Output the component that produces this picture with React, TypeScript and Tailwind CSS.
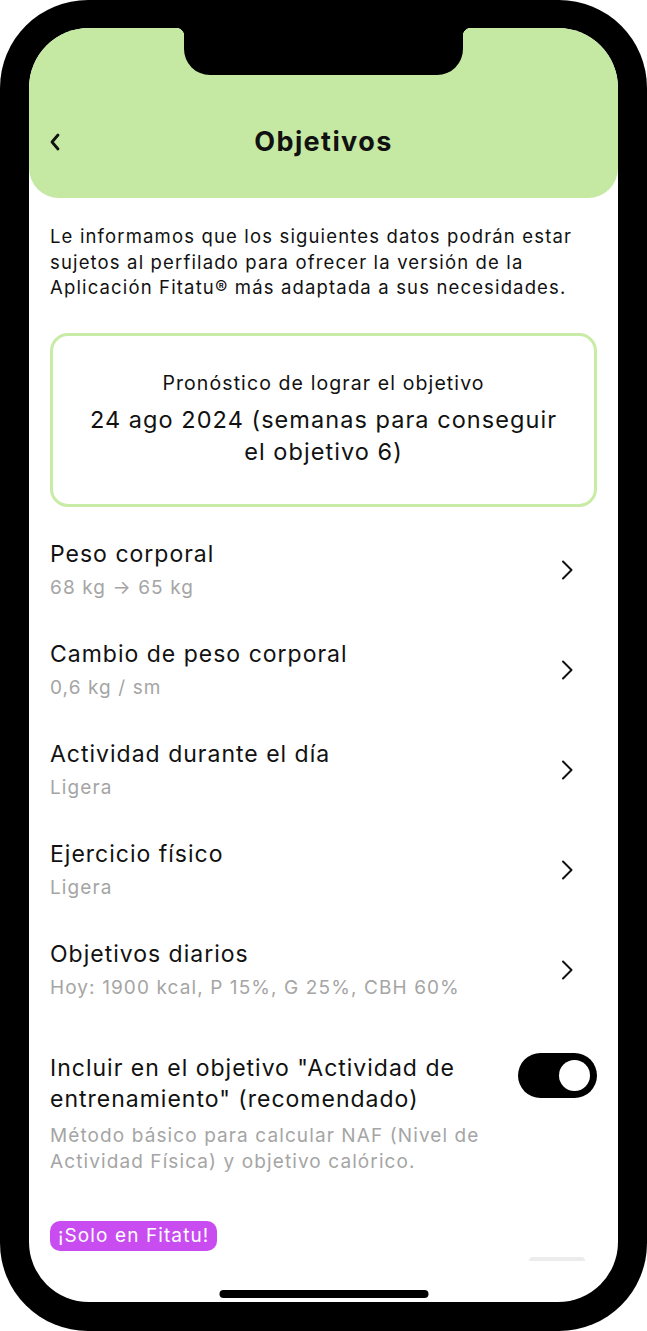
import React from "react";

const font = { fontFamily: "Inter, 'Noto Sans', sans-serif" };

const Chevron = () => (
    <svg width="16" height="22" viewBox="0 0 16 22" fill="none">
        <path d="M4 2.5 L12.5 11 L4 19.5" stroke="#111" strokeWidth="2" strokeLinecap="round" strokeLinejoin="round" />
    </svg>
);

const rows = [
    { title: "Peso corporal", sub: "68 kg → 65 kg" },
    { title: "Cambio de peso corporal", sub: "0,6 kg / sm" },
    { title: "Actividad durante el día", sub: "Ligera" },
    { title: "Ejercicio físico", sub: "Ligera" },
    { title: "Objetivos diarios", sub: "Hoy: 1900 kcal, P 15%, G 25%, CBH 60%" },
];

const Row = ({ title, sub }: { title: string; sub: string }) => (
    <div className="flex items-center justify-between h-[100px]">
        <div className="flex flex-col">
            <span className="text-[23px] leading-[30px] text-[#111] tracking-[1px]">{title}</span>
            <span className="text-[19px] leading-[26px] text-[#a5a5a5] mt-[6px] tracking-[1.1px]">{sub}</span>
        </div>
        <div className="mr-[22px]">
            <Chevron />
        </div>
    </div>
);

export default function App() {
    return (
        <div className="w-[647px] h-[1331px] bg-white" style={font}>
            <div className="relative w-full h-full bg-black rounded-[88px] p-[29px] pt-[28px]">
                <div className="relative w-full h-full bg-white rounded-[60px] overflow-hidden flex flex-col">
                    {/* header */}
                    <div className="h-[170px] bg-[#c5e9a2] rounded-b-[30px] flex items-end pb-[36px] px-[18px] shrink-0">
                        <div className="relative w-full h-[40px] flex items-center justify-center">
                            <button className="absolute left-0 top-0 h-[40px] flex items-center">
                                <svg width="16" height="22" viewBox="0 0 16 22" fill="none">
                                    <path d="M11 4 L5 11 L11 18" stroke="#111" strokeWidth="2.8" strokeLinecap="round" strokeLinejoin="round" />
                                </svg>
                            </button>
                            <h1 className="text-[27px] font-bold text-[#111] tracking-[1.4px]">Objetivos</h1>
                        </div>
                    </div>

                    <div className="px-[21px] flex flex-col">
                        <p className="mt-[26px] text-[18.5px] leading-[25.5px] text-[#111] tracking-[1.15px]">
                            Le informamos que los siguientes datos podrán estar sujetos al perfilado para ofrecer la versión de la Aplicación Fitatu® más adaptada a sus necesidades.
                        </p>

                        <div className="mt-[32px] h-[174px] border-[3px] border-[#c8eba6] rounded-[18px] flex flex-col items-center justify-center text-center px-[26px]">
                            <span className="text-[19.5px] leading-[25px] text-[#111] tracking-[1.1px]">Pronóstico de lograr el objetivo</span>
                            <span className="mt-[8px] text-[23.5px] leading-[32px] text-[#111] tracking-[1.05px]">
                                24 ago 2024 (semanas para conseguir el objetivo 6)
                            </span>
                        </div>

                        <div className="mt-[13px] flex flex-col">
                            {rows.map((r) => (
                                <Row key={r.title} title={r.title} sub={r.sub} />
                            ))}
                        </div>

                        <div className="mt-[33px] flex items-start justify-between">
                            <div className="flex flex-col w-[450px]">
                                <span className="text-[23px] leading-[31px] text-[#111] tracking-[1px]">
                                    Incluir en el objetivo "Actividad de entrenamiento" (recomendado)
                                </span>
                                <span className="mt-[8px] text-[19px] leading-[26px] text-[#a5a5a5] tracking-[1.1px]">
                                    Método básico para calcular NAF (Nivel de Actividad Física) y objetivo calórico.
                                </span>
                            </div>
                            <div className="w-[79px] h-[45px] rounded-full bg-black flex items-center justify-end pr-[7px] shrink-0">
                                <div className="w-[31px] h-[31px] rounded-full bg-white" />
                            </div>
                        </div>

                        <div className="mt-[46px] flex">
                            <span className="h-[30px] px-[8px] rounded-[10px] bg-[#c94cf1] text-white text-[19px] leading-[30px] tracking-[1.1px]">
                                ¡Solo en Fitatu!
                            </span>
                        </div>
                        <div className="flex justify-end pr-[12px] mt-[6px]">
                            <div className="w-[56px] h-[4px] rounded-t-full bg-[#ececec]" />
                        </div>
                    </div>

                    <div className="absolute bottom-[4px] left-1/2 -translate-x-1/2 w-[209px] h-[8px] rounded-full bg-black" />
                </div>

                {/* notch */}
                <div className="absolute top-[27px] left-[184px] w-[279px] h-[48px] bg-black rounded-b-[26px]" />
                <div className="absolute top-[28px] left-[176px] w-[8px] h-[8px] bg-[radial-gradient(circle_at_0_100%,transparent_8px,black_8.5px)]" />
                <div className="absolute top-[28px] left-[463px] w-[8px] h-[8px] bg-[radial-gradient(circle_at_100%_100%,transparent_8px,black_8.5px)]" />
            </div>
        </div>
    );
}
